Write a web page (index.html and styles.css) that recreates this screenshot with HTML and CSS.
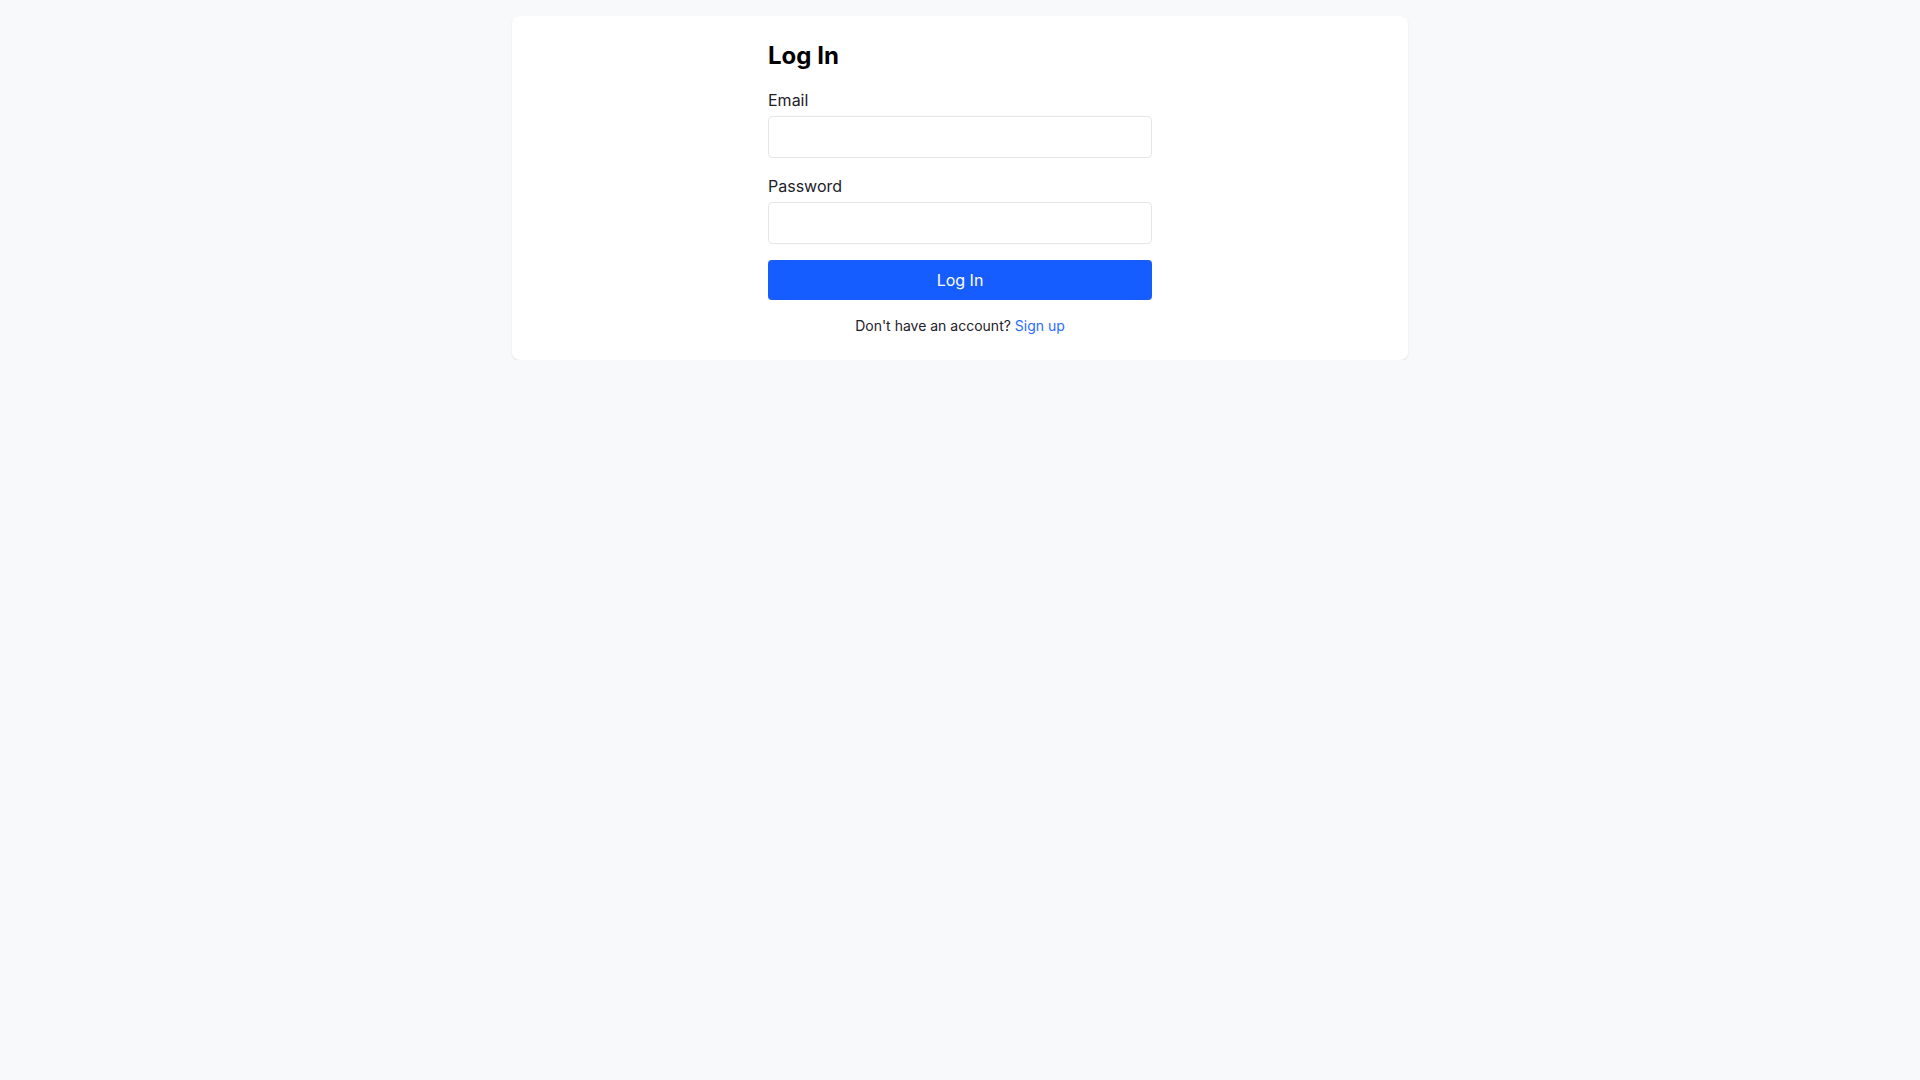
FILE: index.html
```html
<!DOCTYPE html>
<html lang="en">
<head>
<meta charset="utf-8">
<title>Log In</title>
<link rel="stylesheet" href="styles.css">
</head>
<body>
<main class="page">
  <section class="card">
    <form class="form">
      <h1 class="title">Log In</h1>
      <div class="field">
        <label class="label" for="email">Email</label>
        <input class="input" id="email" type="email">
      </div>
      <div class="field">
        <label class="label" for="password">Password</label>
        <input class="input" id="password" type="password">
      </div>
      <button class="button" type="button">Log In</button>
      <p class="footer">Don't have an account? <a class="link" href="#">Sign up</a></p>
    </form>
  </section>
</main>
</body>
</html>
```

FILE: styles.css
```css
* { box-sizing: border-box; }
html, body {
  margin: 0;
  padding: 0;
  background: #f8f9fb;
  font-family: Inter, "Noto Sans", sans-serif;
  color: #1d2129;
}
.page {
  padding-top: 16px;
  display: flex;
  justify-content: center;
}
.card {
  width: 896px;
  background: #ffffff;
  border-radius: 8px;
  padding: 24px;
  box-shadow: 0 1px 2px rgba(0, 0, 0, 0.1);
  display: flex;
  justify-content: center;
}
.form {
  width: 384px;
  display: flex;
  flex-direction: column;
  gap: 16px;
  margin: 0;
}
.title {
  margin: 0;
  font-size: 24px;
  line-height: 32px;
  font-weight: 700;
  color: #000000;
}
.field {
  display: flex;
  flex-direction: column;
  gap: 4px;
}
.label {
  font-size: 16px;
  line-height: 24px;
  color: #1d2129;
}
.input {
  height: 42px;
  border: 1px solid #e5e6eb;
  border-radius: 4px;
  padding: 8px 12px;
  font: inherit;
  background: #fff;
  outline: none;
}
.button {
  height: 40px;
  border: none;
  border-radius: 4px;
  background: #165dff;
  color: #ffffff;
  font-family: inherit;
  font-size: 16px;
  line-height: 24px;
  cursor: pointer;
}
.footer {
  margin: 0;
  text-align: center;
  font-size: 14px;
  line-height: 20px;
  color: #1d2129;
}
.link {
  color: #2a6bff;
  text-decoration: none;
}
```
